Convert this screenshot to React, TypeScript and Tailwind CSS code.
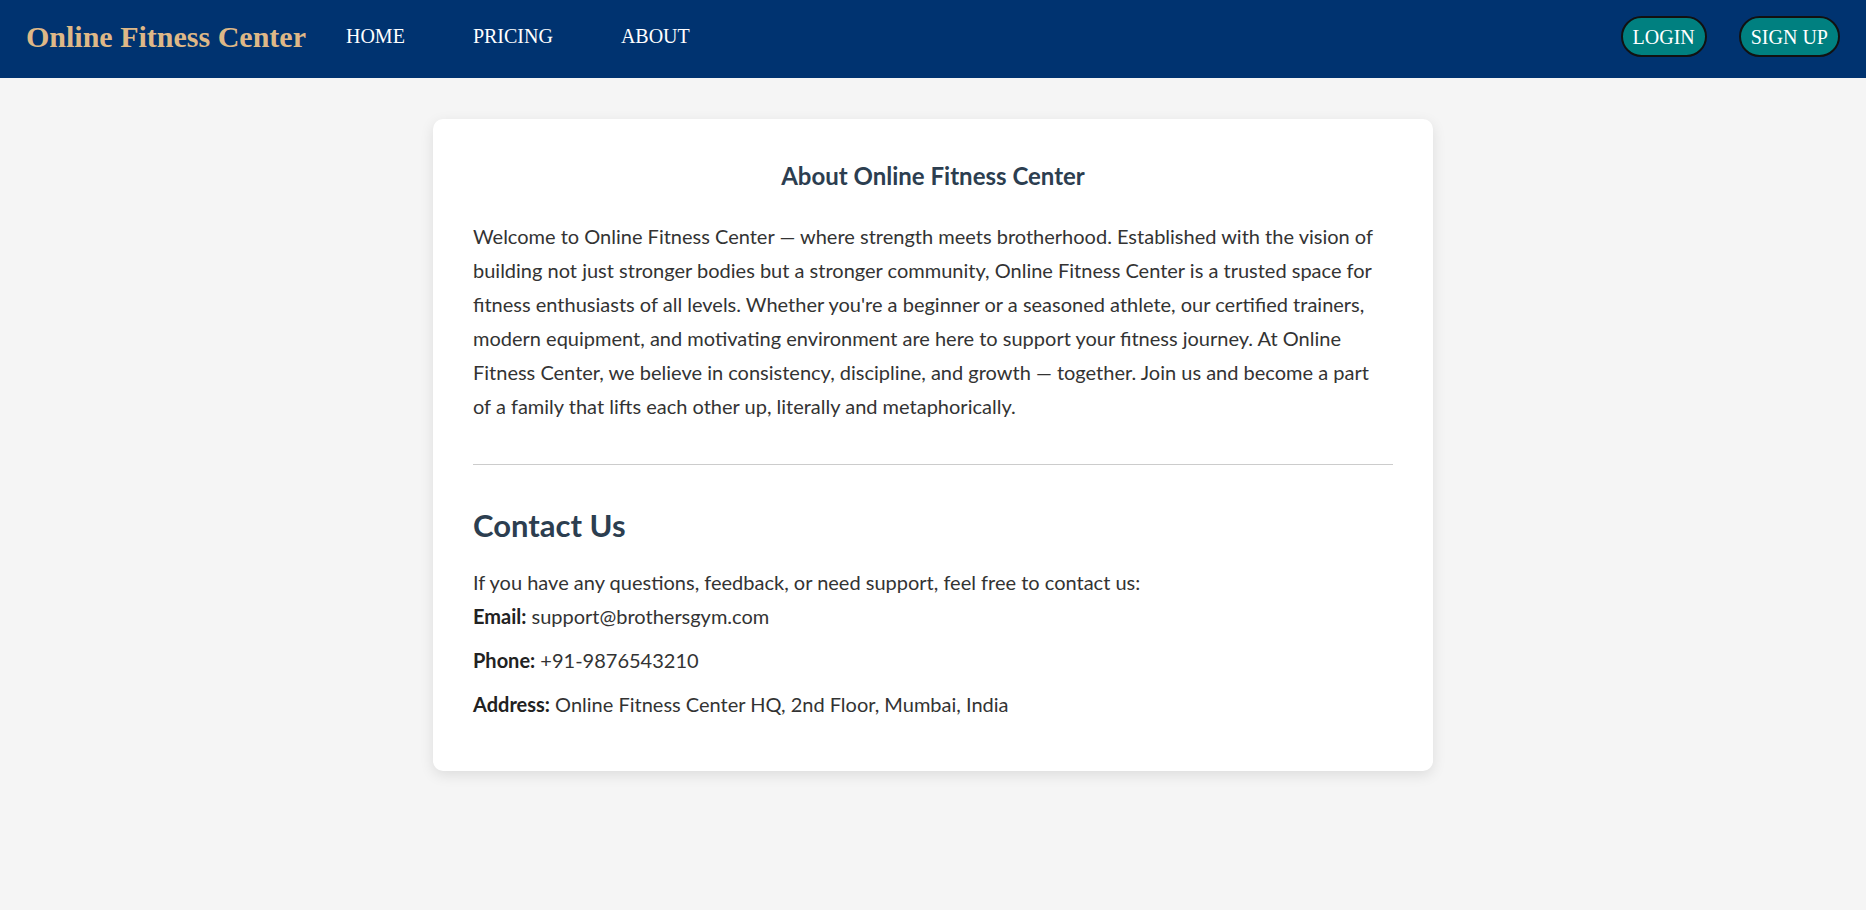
import React from "react";

const serif = { fontFamily: '"Liberation Serif", "Times New Roman", serif' };

export default function App() {
  return (
    <div className="min-h-screen bg-[#f5f5f5]" style={{ fontFamily: 'Lato, "Noto Sans", sans-serif' }}>
      <nav className="h-[78px] bg-[#003370] flex items-center pb-[3px] pl-[26px] pr-[26px]" style={serif}>
        <div className="mb-[2px] text-[30px] font-bold text-[#deb887] leading-none">Online Fitness Center</div>
        <div className="flex items-center ml-[40px] mb-[4px] gap-[68px] text-[20px] text-white leading-none">
          <span>HOME</span>
          <span>PRICING</span>
          <span>ABOUT</span>
        </div>
        <div className="ml-auto mb-[2px] flex items-center gap-[32px]">
          <button className="h-[41px] px-[10px] rounded-full border-2 border-[#111] bg-[#008080] text-white text-[20px] leading-none" style={serif}>LOGIN</button>
          <button className="h-[41px] px-[10px] rounded-full border-2 border-[#111] bg-[#008080] text-white text-[20px] leading-none" style={serif}>SIGN UP</button>
        </div>
      </nav>

      <main className="pt-[41px] flex justify-center">
        <div className="w-[1000px] bg-white rounded-[10px] shadow-[0_4px_14px_rgba(0,0,0,0.1)] px-[40px] pt-[40px] pb-[50px]">
          <h2 className="text-center text-[24px] font-bold text-[#2c3e50] leading-[33px]">About Online Fitness Center</h2>
          <p className="mt-[27px] text-[20px] leading-[34px] text-[#333]">
            Welcome to Online Fitness Center — where strength meets brotherhood. Established with the vision of building not just stronger bodies but a stronger community, Online Fitness Center is a trusted space for fitness enthusiasts of all levels. Whether you're a beginner or a seasoned athlete, our certified trainers, modern equipment, and motivating environment are here to support your fitness journey. At Online Fitness Center, we believe in consistency, discipline, and growth — together. Join us and become a part{" "}
            {"of\u00a0a"} family that lifts each other up, literally and metaphorically.
          </p>
          <hr className="mt-[41px] border-0 border-t border-[#ccc]" />
          <h2 className="mt-[40px] text-[31px] font-bold text-[#2c3e50] leading-[40px]">Contact Us</h2>
          <p className="mt-[20px] text-[20px] leading-[34px] text-[#333]">
            If you have any questions, feedback, or need support, feel free to contact us:
            <br />
            <strong className="text-[#222]">Email:</strong> support@brothersgym.com
          </p>
          <p className="mt-[10px] text-[20px] leading-[34px] text-[#333]">
            <strong className="text-[#222]">Phone:</strong> +91-9876543210
          </p>
          <p className="mt-[10px] text-[20px] leading-[34px] text-[#333]">
            <strong className="text-[#222]">Address:</strong> Online Fitness Center HQ, 2nd Floor, Mumbai, India
          </p>
        </div>
      </main>
    </div>
  );
}
